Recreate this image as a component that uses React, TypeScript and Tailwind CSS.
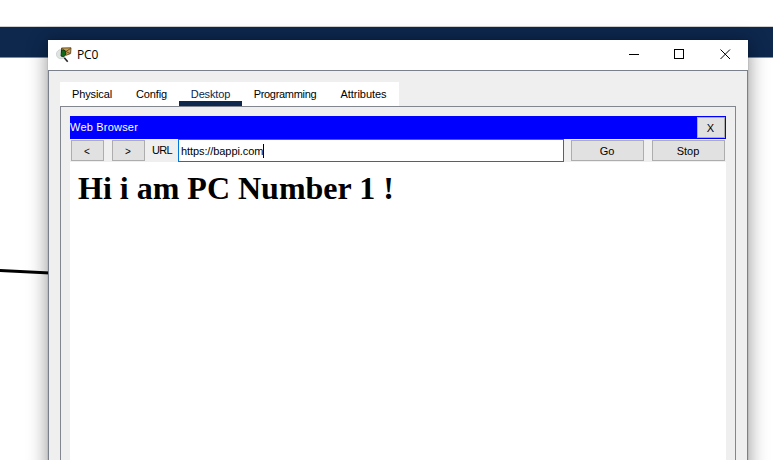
import React from "react";

type TabProps = { label: string; width: string; text?: string; active?: boolean };

function Tab({ label, width, text = "", active }: TabProps) {
  return (
    <div
      className={`${width} box-border flex h-6 justify-center border-b-[5px] pt-[4px] ${
        active ? "border-[#0d274d] text-[#0d274d]" : "border-transparent text-black"
      }`}
    >
      <span className={`leading-4 whitespace-nowrap ${text}`}>{label}</span>
    </div>
  );
}

function PushButton({ label, className }: { label: string; className: string }) {
  return (
    <button className={`flex shrink-0 items-center justify-center border border-[#adadad] bg-[#e1e1e1] text-black ${className}`}>
      {label}
    </button>
  );
}

function AppIcon() {
  return (
    <svg width="17" height="16" viewBox="0 0 17 16" className="shrink-0">
      <circle cx="5" cy="7.2" r="4.6" fill="#dfe3e2" stroke="#c9cdcc" strokeWidth="0.8" />
      <path d="M5.5 1 15 .8 14.6 6.6 10 8.3 5.5 6Z" fill="#c9a052" stroke="#4b3514" strokeWidth=".8" />
      <path d="m6 1.5 4 3 4.5-3M10 4.5l4 2" fill="none" stroke="#5b4018" strokeWidth=".8" />
      <path d="M5.5 3 9 3.6l1 3.4-2.5 3-2.5-1Z" fill="#126817" stroke="#092d0b" strokeWidth=".8" />
      <path d="m8.3 10.8 3.4 4" stroke="#252525" strokeWidth="1.6" />
    </svg>
  );
}

export default function App() {
  return (
    <div className="relative h-[460px] w-[773px] overflow-hidden bg-white font-['Liberation_Sans',Arial,sans-serif] text-[11px]">
      <div className="h-[26px]" />
      <div className="h-8 border-t border-b border-t-[#cfcfcf] border-b-[#858a9a] bg-[#0d274d]" />
      <svg className="absolute top-[261px] left-0" width="60" height="20">
        <path d="M-2 9.4 60 12.6" stroke="#000" strokeWidth="3" />
      </svg>

      <main className="absolute top-10 left-12 flex h-[460px] w-[700px] flex-col bg-[#efefef] shadow-[0_3px_18px_1px_rgba(0,0,0,0.4),0_0_1px_0_rgba(0,0,0,0.35)]">
        <header className="flex h-[30px] shrink-0 items-center bg-white">
          <div className="flex items-center pl-2">
            <AppIcon />
            <span className="ml-[4px] font-['Open_Sans',sans-serif] text-[12px] leading-4 tracking-[-0.1px] text-black">PC0</span>
          </div>
          <div className="ml-auto flex items-center">
            <svg width="120" height="30" fill="none" stroke="#000">
              <path d="M1 14.5h10M46.5 9.5h9v9h-9z" shapeRendering="crispEdges" />
              <path d="m92.5 9.5 9.5 9.5m0-9.5-9.5 9.5" />
            </svg>
          </div>
        </header>

        <div className="flex min-h-0 grow flex-col border-x border-t border-[#7b818b] px-[11px] pt-[11px]">
          <nav className="flex h-6 w-[339px] shrink-0 bg-white">
            <Tab label="Physical" width="w-16" text="tracking-[-0.1px]" />
            <Tab label="Config" width="w-[55px]" text="tracking-[-0.1px]" />
            <Tab label="Desktop" width="w-[63px]" text="tracking-[-0.15px]" active />
            <Tab label="Programming" width="w-[86px]" text="tracking-[-0.3px]" />
            <Tab label="Attributes" width="w-[71px]" text="tracking-[-0.05px]" />
          </nav>

          <section className="flex min-h-0 w-[676px] grow flex-col border border-b-0 border-[#82878f] px-[9px] pt-[9px]">
            <div className="flex h-[23px] shrink-0 items-center justify-between bg-[#0000ff] pr-px text-white">
              <span className="tracking-[0.2px]">Web Browser</span>
              <PushButton label="X" className="h-[21px] w-7 pt-px pr-px" />
            </div>
            <div className="flex h-[23px] shrink-0 items-center pr-px pl-px">
              <PushButton label="<" className="h-[21px] w-[33px] pt-[2px] pr-px text-[10px]" />
              <PushButton label=">" className="ml-2 h-[21px] w-[33px] pt-[2px] pr-px text-[10px]" />
              <span className="w-[33px] pb-[2px] pl-[7px] leading-4 tracking-[-0.7px]">URL</span>
              <div className="flex h-[23px] w-[386px] shrink-0 items-center border border-[#0078d7] bg-white pl-[2px]">
                <span className="pt-[2px] tracking-[-0.09px] whitespace-nowrap text-black">https://bappi.com</span>
                <span className="h-[14px] w-px bg-black" />
              </div>
              <PushButton label="Go" className="ml-[7px] h-[21px] w-[73px] pt-[2px] pr-px" />
              <PushButton label="Stop" className="ml-2 h-[21px] w-[73px] pt-[2px] pr-px" />
            </div>
            <article className="grow bg-white pt-[8px] pl-2">
              <h1 className="font-['Liberation_Serif','Times_New_Roman',serif] text-[32px] leading-[37px] font-bold whitespace-nowrap text-black">
                Hi i am PC Number 1 !
              </h1>
            </article>
          </section>
        </div>
      </main>
    </div>
  );
}
